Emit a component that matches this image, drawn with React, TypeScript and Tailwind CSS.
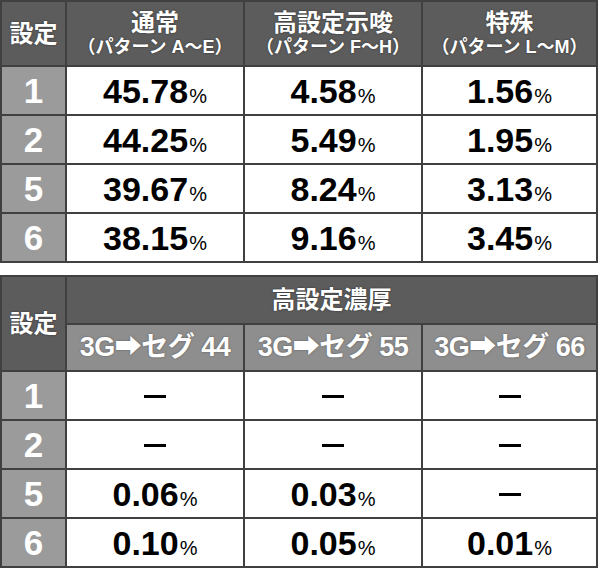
const jp = { fontFamily: '"Liberation Sans", "Noto Sans CJK JP", sans-serif' };

const top = [
  ["1", "45.78", "4.58", "1.56"],
  ["2", "44.25", "5.49", "1.95"],
  ["5", "39.67", "8.24", "3.13"],
  ["6", "38.15", "9.16", "3.45"],
];

const bottom = [
  ["1", null, null, null],
  ["2", null, null, null],
  ["5", "0.06", "0.03", null],
  ["6", "0.10", "0.05", "0.01"],
];

const Val = ({ v }: { v: string | null }) =>
  v === null ? (
    <span className="inline-block w-[22px] h-[3px] bg-black align-middle" />
  ) : (
    <span className="whitespace-nowrap">
      <span className="font-bold text-black text-[34px]">{v}</span>
      <span className="text-[20px] text-black ml-[1px]">%</span>
    </span>
  );

const heads = [
  ["通常", "（パターン A～E）"],
  ["高設定示唆", "（パターン F～H）"],
  ["特殊", "（パターン L～M）"],
];

const Cols = () => (
  <colgroup>
    <col className="w-[65px]" />
    <col className="w-[178px]" />
    <col className="w-[178px]" />
    <col className="w-[175px]" />
  </colgroup>
);

export default function App() {
  return (
    <div className="w-[600px] h-[579px] bg-white" style={jp}>
      <table className="border-collapse table-fixed w-[596px] text-center">
        <Cols />
        <thead>
          <tr className="h-[65px] bg-[#5c5c5c] text-white [text-shadow:0_0_2px_#2a2a2a]">
            <th className="border-2 border-[#404040] text-[24px] font-bold">設定</th>
            {heads.map(([a, b]) => (
              <th key={a} className="border-2 border-[#404040] font-bold leading-none">
                <div className="text-[24px] leading-[27px]">{a}</div>
                <div className="text-[18px] leading-[22px] whitespace-nowrap">{b}</div>
              </th>
            ))}
          </tr>
        </thead>
        <tbody>
          {top.map((r) => (
            <tr key={r[0]} className="h-[49px]">
              <td className="border-2 border-[#404040] bg-[#9b9b9b] text-white font-bold text-[35px] leading-none">{r[0]}</td>
              {r.slice(1).map((v, i) => (
                <td key={i} className="border-2 border-[#404040] leading-none">
                  <Val v={v} />
                </td>
              ))}
            </tr>
          ))}
        </tbody>
      </table>

      <table className="border-collapse table-fixed w-[596px] text-center mt-[12px]">
        <Cols />
        <thead>
          <tr className="h-[48px] bg-[#5c5c5c] text-white [text-shadow:0_0_2px_#2a2a2a]">
            <th rowSpan={2} className="border-2 border-[#404040] text-[24px] font-bold">設定</th>
            <th colSpan={3} className="border-2 border-[#404040] text-[24px] font-bold">高設定濃厚</th>
          </tr>
          <tr className="h-[47px] bg-[#8e8e8e] text-white [text-shadow:0_0_2px_#555]">
            {["44", "55", "66"].map((n) => (
              <th key={n} className="border-2 border-[#404040] text-[27px] font-bold tracking-[-0.5px] whitespace-nowrap">
                3G➡セグ {n}
              </th>
            ))}
          </tr>
        </thead>
        <tbody>
          {bottom.map((r) => (
            <tr key={r[0]} className="h-[49px]">
              <td className="border-2 border-[#404040] bg-[#9b9b9b] text-white font-bold text-[35px] leading-none">{r[0]}</td>
              {r.slice(1).map((v, i) => (
                <td key={i} className="border-2 border-[#404040] leading-none">
                  <Val v={v} />
                </td>
              ))}
            </tr>
          ))}
        </tbody>
      </table>
    </div>
  );
}
